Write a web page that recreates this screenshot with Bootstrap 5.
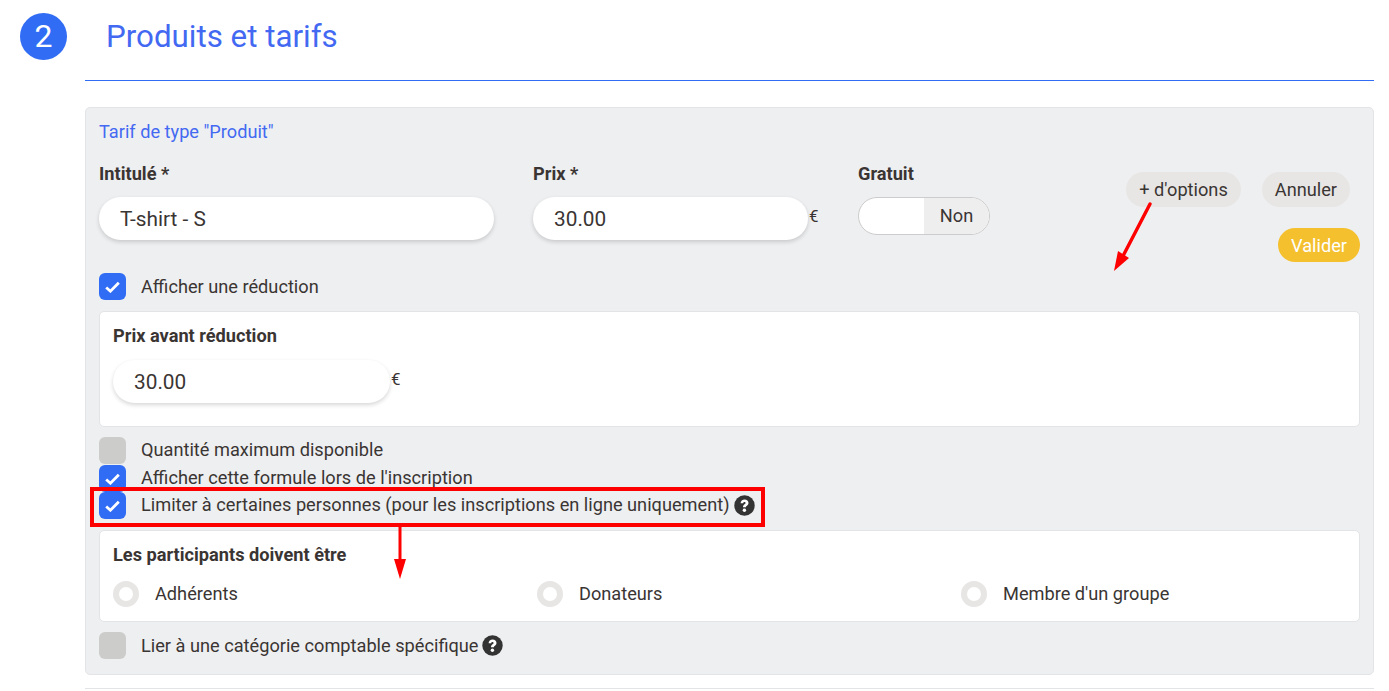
<!DOCTYPE html>
<html lang="fr">
<head>
<meta charset="utf-8">
<title>Produits et tarifs</title>
<link href="https://cdn.jsdelivr.net/npm/bootstrap@5.3.0/dist/css/bootstrap.min.css" rel="stylesheet">
<style>
html,body{height:691px;overflow:hidden;}
body{font-family:Roboto,"Liberation Sans",sans-serif;font-size:18.2px;color:#3a3533;background:#fff;position:relative;}
.head-row{height:80px;padding-left:20px;}
.step-dot{width:47px;height:47px;border-radius:50%;background:#316cf4;color:#fff;font-size:32px;line-height:47px;text-align:center;margin-top:13px;flex:none;}
.step-title{font-size:31.3px;line-height:47px;color:#4369f2;margin-top:13px;margin-left:39px;}
.main-zone{margin-left:85px;width:1289px;}
.blue-rule{border-top:1px solid #316cf4;height:27px;}
.tarif-box{height:568px;background:#eeeff1;border:1px solid #e3e4e6;border-radius:5px;padding:14px 13px 0 13px;}
.tarif-title{color:#4369f2;font-size:18.2px;line-height:20px;}
.top-fields{height:131px;padding-top:22px;}
.fld-label{font-weight:700;font-size:18.2px;line-height:20px;color:#3a3533;margin-bottom:13px;}
.pill-input{height:43px;border-radius:22px;background:#fff;box-shadow:0 2px 4px rgba(0,0,0,.16);padding-left:21px;font-size:20.8px;line-height:44px;color:#3a3533;}
.w-name{width:395px;}
.w-price{width:275px;}
.w-promo{width:277px;}
.euro{font-size:17px;line-height:20px;margin-left:1px;margin-top:9px;}
.col-name{width:434px;flex:none;}
.col-price{width:325px;flex:none;}
.col-free{width:268px;flex:none;}
.toggle-off{width:132px;height:38px;border:1px solid #cccccc;border-radius:19px;overflow:hidden;background:#fff;}
.toggle-knob{width:65px;}
.toggle-txt{flex:1;background:#eeeeee;text-align:center;line-height:36px;}
.pill-btn{height:35px;line-height:35px;border-radius:18px;background:#e8e6e4;padding:0 13px;color:#3a3533;white-space:nowrap;}
.pill-go{background:#f5c02e;color:#fff;margin-top:21px;height:34px;line-height:36px;}
.btn-col{width:234px;margin-top:8px;flex:none;}
.btn-top{margin-right:10px;gap:21px;}
.tick{width:27px;height:27px;border-radius:6px;flex:none;margin-right:15px;display:flex;align-items:center;justify-content:center;}
.tick-on{background:#316cf4;}
.tick-off{background:#ccccca;}
.line-chk{height:27px;line-height:27px;white-space:nowrap;}
.gap-before{margin-top:10px;}
.gap-tiny{margin-top:1px;}
.txt-up{line-height:25px;}
.white-box{background:#fff;border:1px solid #e3e4e6;border-radius:5px;width:1261px;padding:14px 13px 0 13px;}
.promo-box{height:116px;margin-top:11px;}
.promo-box .fld-label{margin-bottom:14px;}
.part-box{height:92px;margin-top:11px;}
.part-box .fld-label{margin-bottom:15px;}
.radio-col{width:424px;flex:none;}
.radio-ring{width:26px;height:26px;border-radius:50%;border:6px solid #e8e6e4;background:#fff;margin-right:16px;flex:none;}
.help-ico{margin-left:4px;flex:none;}
.bottom-rule{border-top:1px solid #e3e4e6;margin-top:13px;}
.mark-layer{position:absolute;left:0;top:0;pointer-events:none;}
</style>
</head>
<body>
<div class="head-row d-flex">
  <div class="step-dot">2</div>
  <div class="step-title">Produits et tarifs</div>
</div>
<div class="main-zone">
  <div class="blue-rule"></div>
  <div class="tarif-box">
    <div class="tarif-title">Tarif de type "Produit"</div>
    <div class="d-flex top-fields">
      <div class="col-name">
        <div class="fld-label">Intitulé *</div>
        <div class="pill-input w-name">T-shirt - S</div>
      </div>
      <div class="col-price">
        <div class="fld-label">Prix *</div>
        <div class="d-flex"><div class="pill-input w-price">30.00</div><div class="euro">€</div></div>
      </div>
      <div class="col-free">
        <div class="fld-label">Gratuit</div>
        <div class="toggle-off d-flex"><div class="toggle-knob"></div><div class="toggle-txt">Non</div></div>
      </div>
      <div class="btn-col d-flex flex-column align-items-end">
        <div class="d-flex btn-top"><div class="pill-btn">+ d'options</div><div class="pill-btn">Annuler</div></div>
        <div class="pill-btn pill-go">Valider</div>
      </div>
    </div>
    <div class="d-flex line-chk">
      <div class="tick tick-on"><svg width="15" height="12" viewBox="0 0 15 12"><path d="M1.2 6.5 5.4 10.2 13.8 1.8" fill="none" stroke="#fff" stroke-width="2.8"/></svg></div>
      <div>Afficher une réduction</div>
    </div>
    <div class="white-box promo-box">
      <div class="fld-label">Prix avant réduction</div>
      <div class="d-flex"><div class="pill-input w-promo">30.00</div><div class="euro">€</div></div>
    </div>
    <div class="d-flex line-chk gap-before">
      <div class="tick tick-off"></div><div class="txt-up">Quantité maximum disponible</div>
    </div>
    <div class="d-flex line-chk gap-tiny">
      <div class="tick tick-on"><svg width="15" height="12" viewBox="0 0 15 12"><path d="M1.2 6.5 5.4 10.2 13.8 1.8" fill="none" stroke="#fff" stroke-width="2.8"/></svg></div>
      <div class="txt-up">Afficher cette formule lors de l'inscription</div>
    </div>
    <div class="d-flex line-chk">
      <div class="tick tick-on"><svg width="15" height="12" viewBox="0 0 15 12"><path d="M1.2 6.5 5.4 10.2 13.8 1.8" fill="none" stroke="#fff" stroke-width="2.8"/></svg></div>
      <div class="txt-up">Limiter à certaines personnes (pour les inscriptions en ligne uniquement)</div>
      <svg class="help-ico align-self-center" width="21" height="21" viewBox="0 0 21 21"><circle cx="10.5" cy="10.5" r="10.2" fill="#333"/><path d="M6.6 8.2c0-2.2 1.8-3.7 4-3.7 2.2 0 3.9 1.4 3.9 3.4 0 2.6-2.6 2.6-2.6 4.3H9c0-3 2.6-2.9 2.6-4.2 0-.7-.5-1.1-1.1-1.1-.8 0-1.2.5-1.3 1.4Z" fill="#fff"/><circle cx="10.4" cy="15.3" r="1.7" fill="#fff"/></svg>
    </div>
    <div class="white-box part-box">
      <div class="fld-label">Les participants doivent être</div>
      <div class="d-flex">
        <div class="radio-col d-flex align-items-center"><div class="radio-ring"></div><div>Adhérents</div></div>
        <div class="radio-col d-flex align-items-center"><div class="radio-ring"></div><div>Donateurs</div></div>
        <div class="radio-col d-flex align-items-center"><div class="radio-ring"></div><div>Membre d'un groupe</div></div>
      </div>
    </div>
    <div class="d-flex line-chk gap-before">
      <div class="tick tick-off"></div><div>Lier à une catégorie comptable spécifique</div>
      <svg class="help-ico align-self-center" width="21" height="21" viewBox="0 0 21 21"><circle cx="10.5" cy="10.5" r="10.2" fill="#333"/><path d="M6.6 8.2c0-2.2 1.8-3.7 4-3.7 2.2 0 3.9 1.4 3.9 3.4 0 2.6-2.6 2.6-2.6 4.3H9c0-3 2.6-2.9 2.6-4.2 0-.7-.5-1.1-1.1-1.1-.8 0-1.2.5-1.3 1.4Z" fill="#fff"/><circle cx="10.4" cy="15.3" r="1.7" fill="#fff"/></svg>
    </div>
  </div>
  <div class="bottom-rule"></div>
</div>
<svg class="mark-layer" width="1389" height="691" viewBox="0 0 1389 691">
  <path d="M1150 204 1123 256" stroke="#fe0000" stroke-width="3.4" stroke-linecap="round" fill="none"/>
  <path d="M1114 271 1118 251 1129 258Z" fill="#fe0000"/>
  <rect x="92" y="489" width="671" height="36" fill="none" stroke="#fe0000" stroke-width="4"/>
  <path d="M400 527V562" stroke="#fe0000" stroke-width="3" fill="none"/>
  <path d="M394 559H406L400 579Z" fill="#fe0000"/>
</svg>
</body>
</html>
